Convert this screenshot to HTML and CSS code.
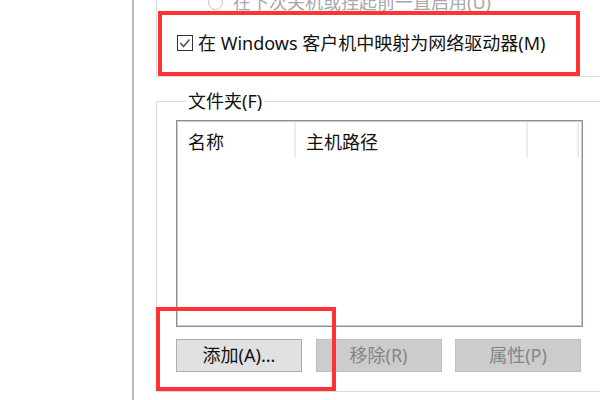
FILE: index.html
```html
<!DOCTYPE html>
<html lang="zh-CN">
<head>
<meta charset="utf-8">
<title>NFS 共享设置</title>
<link rel="stylesheet" href="styles.css">
</head>
<body>
<div class="page">
  <div class="side"></div>
  <div class="content">
    <div class="group-top">
      <div class="radio-row">
        <span class="radio"></span>
        <span class="radio-label">在下次关机或挂起前一直启用(U)</span>
      </div>
      <div class="check-row">
        <span class="checkbox">
          <svg width="14" height="14" viewBox="0 0 14 14"><polyline points="2.5,7 5.5,10.5 11.5,3.5" fill="none" stroke="#555" stroke-width="1.6"/></svg>
        </span>
        <span class="check-label">在 Windows 客户机中映射为网络驱动器(M)</span>
      </div>
    </div>
    <fieldset class="group-files">
      <legend class="legend">文件夹(F)</legend>
      <div class="listview">
        <div class="lv-header">
          <div class="col col-name">名称</div>
          <div class="col col-path">主机路径</div>
          <div class="col col-extra"></div>
        </div>
      </div>
      <div class="buttons">
        <button class="btn">添加(A)...</button>
        <button class="btn disabled">移除(R)</button>
        <button class="btn disabled">属性(P)</button>
      </div>
    </fieldset>
  </div>
  <div class="mark mark-check"></div>
  <div class="mark mark-add"></div>
</div>
</body>
</html>
```
FILE: styles.css
```css
html, body {
  margin: 0;
  padding: 0;
  background: #ffffff;
}
body {
  font-family: "Noto Sans", "Noto Sans CJK SC", sans-serif;
  font-size: 18px;
  color: #111;
  overflow: hidden;
}
.page {
  position: relative;
  display: flex;
  width: 600px;
  height: 400px;
  overflow: hidden;
}
.side {
  width: 132px;
  flex: none;
  border-right: 2px solid #b9b9b9;
}
.content {
  flex: none;
  width: 466px;
  padding-left: 22px;
  overflow: hidden;
}
.group-top {
  display: flow-root;
  height: 76px;
  border-left: 1px solid #dcdcdc;
  border-bottom: 1px solid #dcdcdc;
  width: 700px;
}
.radio-row {
  display: flex;
  align-items: center;
  height: 24px;
  margin-top: -10px;
  padding-left: 51px;
  color: #a8a8a8;
  line-height: 24px;
}
.radio {
  width: 13px;
  height: 13px;
  border: 1px solid #c4c4c4;
  border-radius: 50%;
  margin-right: 10px;
}
.check-row {
  display: flex;
  align-items: center;
  height: 24px;
  margin-top: 17px;
  padding-left: 20px;
  line-height: 24px;
  color: #111;
}
.checkbox {
  width: 14px;
  height: 14px;
  border: 1px solid #333;
  display: flex;
  align-items: center;
  justify-content: center;
  margin-right: 5px;
  background: #fff;
}
.checkbox svg {
  display: block;
}
.group-files {
  margin: 12px 0 0 0;
  padding: 7px 0 19px 19px;
  border: 1px solid #dcdcdc;
  border-right: none;
  width: 700px;
  min-width: 0;
}
.legend {
  margin-left: 10px;
  padding: 0 2px;
  line-height: 24px;
  color: #111;
}
.listview {
  width: 405px;
  height: 205px;
  border: 1px solid #8a8e96;
  box-shadow: inset 0 0 0 1px #c9ccd1;
  background: #fff;
}
.lv-header {
  display: flex;
  height: 37px;
  padding-top: 1px;
}
.col {
  height: 36px;
  line-height: 36px;
  padding-top: 2px;
  box-sizing: border-box;
  border-right: 2px solid #ececec;
  color: #111;
}
.col-name {
  width: 119px;
  padding-left: 11px;
}
.col-path {
  width: 232px;
  padding-left: 10px;
}
.col-extra {
  width: 51px;
}
.buttons {
  display: flex;
  gap: 13.5px;
  margin-top: 12px;
  width: 407px;
}
.btn {
  width: 126px;
  height: 33px;
  border: 1px solid #adadad;
  background: #e1e1e1;
  font-family: "Noto Sans", "Noto Sans CJK SC", sans-serif;
  font-size: 18px;
  color: #111;
  padding: 0;
  line-height: 31px;
}
.btn.disabled {
  background: #cccccc;
  border-color: #bfbfbf;
  color: #858585;
}
.mark {
  position: absolute;
  border: 4px solid #ff3333;
  box-sizing: border-box;
}
.mark-check {
  left: 158px;
  top: 11px;
  width: 422px;
  height: 65px;
}
.mark-add {
  left: 156px;
  top: 307px;
  width: 180px;
  height: 84px;
}
```
